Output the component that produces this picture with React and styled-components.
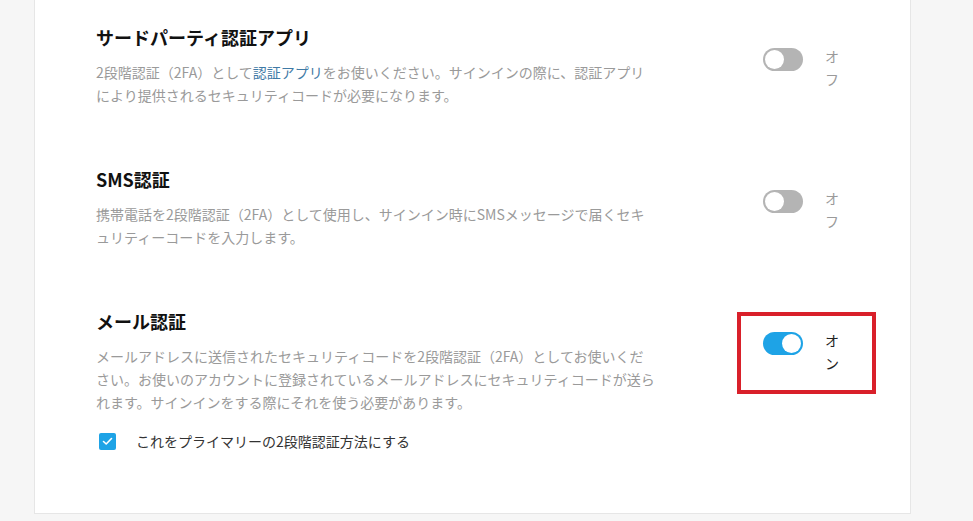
import React from 'react';
import styled, { createGlobalStyle } from 'styled-components';

const GlobalStyle = createGlobalStyle`
  html, body {
    margin: 0;
    padding: 0;
    background: #f6f6f6;
    font-family: 'Noto Sans CJK JP', 'Noto Sans', sans-serif;
  }
`;

const Page = styled.div`
  height: 521px;
  overflow: hidden;
  padding-left: 34px;
`;

const Card = styled.div`
  width: 877px;
  box-sizing: border-box;
  background: #fff;
  border: 1px solid #e6e6e6;
  border-top: none;
  padding: 26px 0 62px 61px;
  display: flex;
  flex-direction: column;
  gap: 58px;
`;

const Row = styled.div`
  display: flex;
  align-items: flex-start;
`;

const Info = styled.div`
  width: 561px;
  margin-right: 80px;
`;

const Title = styled.h3`
  margin: 0 0 13px;
  font-size: 18px;
  line-height: 22px;
  font-weight: 700;
  color: #111;
`;

const Desc = styled.p`
  margin: 0;
  font-size: 14px;
  line-height: 23px;
  color: #9a9a9a;
`;

const Link = styled.a`
  color: #3f7aa6;
  text-decoration: none;
`;

const SwitchGroup = styled.div`
  box-sizing: border-box;
  width: 139px;
  height: 82px;
  margin-top: 2px;
  border: 4px solid ${p => (p.highlighted ? '#d9202a' : 'transparent')};
  padding: 16px 0 0 22px;
  display: flex;
  align-items: flex-start;
  gap: 22px;
`;

const Track = styled.span`
  position: relative;
  width: 40px;
  height: 23px;
  border-radius: 12px;
  background: ${p => (p.on ? '#1ea3e6' : '#b4b4b4')};
  flex-shrink: 0;
`;

const Knob = styled.span`
  position: absolute;
  top: 2px;
  left: ${p => (p.on ? '19px' : '2px')};
  width: 19px;
  height: 19px;
  border-radius: 50%;
  background: #fff;
`;

const SwitchLabel = styled.span`
  width: 14px;
  margin-top: -3px;
  font-size: 14px;
  line-height: 23px;
  color: ${p => (p.on ? '#222' : '#9a9a9a')};
`;

const CheckRow = styled.label`
  display: flex;
  align-items: center;
  gap: 20px;
  margin-top: 17px;
  padding-left: 3px;
  font-size: 14px;
  line-height: 20px;
  color: #333;
`;

const Box = styled.span`
  width: 17px;
  height: 17px;
  border-radius: 2px;
  background: #1ea3e6;
  display: flex;
  align-items: center;
  justify-content: center;
`;

function Toggle({ on, highlighted }) {
  return (
    <SwitchGroup highlighted={highlighted}>
      <Track on={on}>
        <Knob on={on} />
      </Track>
      <SwitchLabel on={on}>{on ? 'オン' : 'オフ'}</SwitchLabel>
    </SwitchGroup>
  );
}

export default function App() {
  return (
    <Page>
      <GlobalStyle />
      <Card>
        <Row>
          <Info>
            <Title>サードパーティ認証アプリ</Title>
            <Desc>
              2段階認証（2FA）として<Link href="#">認証アプリ</Link>をお使いください。サインインの際に、認証アプリにより提供されるセキュリティコードが必要になります。
            </Desc>
          </Info>
          <Toggle on={false} />
        </Row>
        <Row>
          <Info>
            <Title>SMS認証</Title>
            <Desc>
              携帯電話を2段階認証（2FA）として使用し、サインイン時にSMSメッセージで届くセキュリティーコードを入力します。
            </Desc>
          </Info>
          <Toggle on={false} />
        </Row>
        <Row>
          <Info>
            <Title>メール認証</Title>
            <Desc>
              メールアドレスに送信されたセキュリティコードを2段階認証（2FA）としてお使いください。お使いのアカウントに登録されているメールアドレスにセキュリティコードが送られます。サインインをする際にそれを使う必要があります。
            </Desc>
            <CheckRow>
              <Box>
                <svg width="11" height="9" viewBox="0 0 11 9">
                  <path d="M1.5 4.5 L4.2 7 L9.5 1.5" fill="none" stroke="#fff" strokeWidth="1.6" strokeLinecap="round" strokeLinejoin="round" />
                </svg>
              </Box>
              これをプライマリーの2段階認証方法にする
            </CheckRow>
          </Info>
          <Toggle on highlighted />
        </Row>
      </Card>
    </Page>
  );
}
